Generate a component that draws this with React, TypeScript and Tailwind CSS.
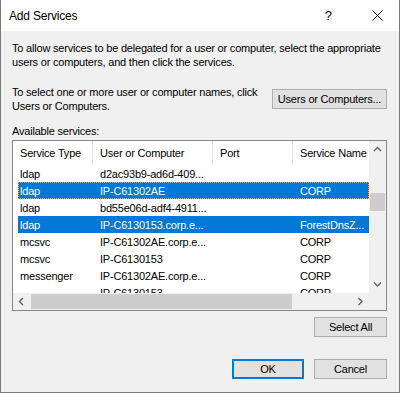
import React from 'react';

const rows = [
    { type: 'ldap', host: 'd2ac93b9-ad6d-409...', port: '', name: '' },
    { type: 'ldap', host: 'IP-C61302AE', port: '', name: 'CORP', selected: true, focus: true },
    { type: 'ldap', host: 'bd55e06d-adf4-4911...', port: '', name: '' },
    { type: 'ldap', host: 'IP-C6130153.corp.e...', port: '', name: 'ForestDnsZ...', selected: true },
    { type: 'mcsvc', host: 'IP-C61302AE.corp.e...', port: '', name: 'CORP' },
    { type: 'mcsvc', host: 'IP-C6130153', port: '', name: 'CORP' },
    { type: 'messenger', host: 'IP-C61302AE.corp.e...', port: '', name: 'CORP' },
    { type: '', host: 'IP-C6130153', port: '', name: 'CORP' },
];

const Chevron = ({ dir }: { dir: 'up' | 'down' | 'left' | 'right' }) => {
    const d = {
        up: 'M1 5 L4.5 1.5 L8 5',
        down: 'M1 1.5 L4.5 5 L8 1.5',
        left: 'M5 1 L1.5 4.5 L5 8',
        right: 'M1.5 1 L5 4.5 L1.5 8',
    }[dir];
    const horiz = dir === 'left' || dir === 'right';
    return (
        <svg width={horiz ? 7 : 9} height={horiz ? 9 : 7} viewBox={horiz ? '0 0 7 9' : '0 0 9 7'}>
            <path d={d} fill="none" stroke="#606060" strokeWidth="1.4" />
        </svg>
    );
};

const Button = ({ children, w, primary }: { children: React.ReactNode; w: string; primary?: boolean }) => (
    <button
        className={`${w} h-[20px] bg-[#e1e1e1] text-black text-[11px] tracking-[-0.2px] flex items-center justify-center ${
            primary ? 'border-2 border-[#0078d7]' : 'border border-[#adadad]'
        }`}
    >
        {children}
    </button>
);

export default function App() {
    return (
        <div
            className="w-[400px] h-[393px] bg-[#f0f0f0] border-x border-b border-[#7a7a7a] flex flex-col text-black overflow-hidden"
            style={{ fontFamily: '"Liberation Sans", Arial, sans-serif' }}
        >
            {/* title bar */}
            <div className="h-[31px] bg-white flex items-center shrink-0">
                <span className="pl-[8px] text-[12px] tracking-[-0.2px]">Add Services</span>
                <span className="ml-auto text-[13px] mr-[40px]">?</span>
                <svg width="11" height="11" viewBox="0 0 11 11" className="mr-[16px]">
                    <path d="M0.5 0.5 L10.5 10.5 M10.5 0.5 L0.5 10.5" stroke="#111" strokeWidth="1" />
                </svg>
            </div>

            <div className="flex flex-col pl-[11px] pr-[12px] text-[11px] leading-[14px] tracking-[-0.2px]">
                <p className="mt-[10px]">
                    To allow services to be delegated for a user or computer, select the appropriate
                    <br />
                    users or computers, and then click the services.
                </p>

                <div className="mt-[16px] flex items-center justify-between">
                    <p>
                        To select one or more user or computer names, click
                        <br />
                        Users or Computers.
                    </p>
                    <Button w="w-[115px]">Users or Computers...</Button>
                </div>

                <p className="mt-[11px]">Available services:</p>

                {/* list view */}
                <div className="mt-[2px] h-[171px] border border-[#828790] bg-white flex flex-col">
                    <div className="flex h-[152px]">
                        <div className="flex-1 overflow-hidden flex flex-col">
                            <div className="h-[24px] flex shrink-0">
                                <div className="w-[80px] pl-[7px] flex items-center border-r border-[#e5e5e5]">Service Type</div>
                                <div className="w-[120px] pl-[7px] flex items-center border-r border-[#e5e5e5]">User or Computer</div>
                                <div className="w-[80px] pl-[7px] flex items-center border-r border-[#e5e5e5]">Port</div>
                                <div className="flex-1 pl-[7px] flex items-center whitespace-nowrap">Service Name</div>
                            </div>
                            {rows.map((r, i) => (
                                <div key={i} className="h-[17px] shrink-0 flex pl-[5px]">
                                    <div
                                        className={`flex-1 flex whitespace-nowrap ${
                                            r.selected ? 'bg-[#0078d7] text-white' : ''
                                        } ${r.focus ? 'outline-1 outline-dotted outline-[#e8a864] outline-offset-[-1px]' : ''}`}
                                    >
                                        <div className="w-[75px] pl-[2px] flex items-center">{r.type}</div>
                                        <div className="w-[120px] pl-[7px] flex items-center">{r.host}</div>
                                        <div className="w-[80px] pl-[7px] flex items-center">{r.port}</div>
                                        <div className="flex-1 pl-[7px] flex items-center">{r.name}</div>
                                    </div>
                                </div>
                            ))}
                        </div>
                        {/* vertical scrollbar */}
                        <div className="w-[17px] bg-[#f0f0f0] flex flex-col shrink-0">
                            <div className="h-[17px] flex items-center justify-center">
                                <Chevron dir="up" />
                            </div>
                            <div className="flex-1 flex flex-col">
                                <div className="h-[35px]" />
                                <div className="h-[18px] bg-[#cdcdcd] mx-[1px]" />
                            </div>
                            <div className="h-[17px] flex items-center justify-center">
                                <Chevron dir="down" />
                            </div>
                        </div>
                    </div>
                    {/* horizontal scrollbar */}
                    <div className="h-[17px] flex bg-[#f0f0f0]">
                        <div className="w-[17px] flex items-center justify-center">
                            <Chevron dir="left" />
                        </div>
                        <div className="flex-1 flex items-center">
                            <div className="w-[261px] h-[15px] bg-[#cdcdcd] ml-[1px]" />
                        </div>
                        <div className="w-[17px] flex items-center justify-center">
                            <Chevron dir="right" />
                        </div>
                        <div className="w-[17px] bg-[#f0f0f0]" />
                    </div>
                </div>

                <div className="mt-[6px] flex justify-end">
                    <Button w="w-[73px]">Select All</Button>
                </div>

                <div className="mt-[22px] flex justify-end gap-[10px]">
                    <Button w="w-[72px]" primary>OK</Button>
                    <Button w="w-[73px]">Cancel</Button>
                </div>
            </div>
        </div>
    );
}
